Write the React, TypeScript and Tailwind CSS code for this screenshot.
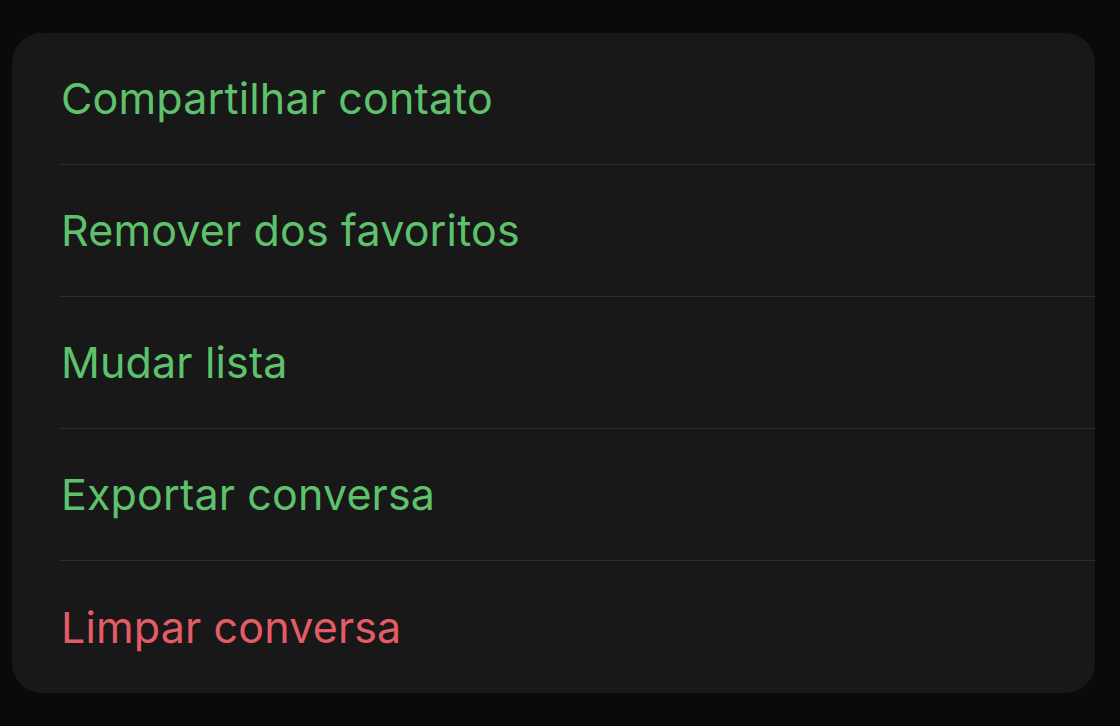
const items = [
  { label: 'Compartilhar contato', danger: false },
  { label: 'Remover dos favoritos', danger: false },
  { label: 'Mudar lista', danger: false },
  { label: 'Exportar conversa', danger: false },
  { label: 'Limpar conversa', danger: true },
];

export default function App() {
  return (
    <div
      className="min-h-screen w-full bg-[#0a0a0a] pt-[33px] pl-[12px] pr-[25px]"
      style={{ fontFamily: 'Inter, "Noto Sans", sans-serif' }}
    >
      <ul className="w-[1083px] rounded-[30px] bg-[#181818] overflow-hidden">
        {items.map((item, i) => (
          <li key={item.label} className="pl-[48px]">
            <div
              className={`flex items-center h-[132px] ${
                i < items.length - 1 ? 'border-b border-[#2d2d2d]' : ''
              }`}
            >
              <span
                className={`pl-[1px] text-[43px] leading-none tracking-[0.15px] ${
                  item.danger ? 'text-[#e35c66]' : 'text-[#5ec26c]'
                }`}
              >
                {item.label}
              </span>
            </div>
          </li>
        ))}
      </ul>
    </div>
  );
}
